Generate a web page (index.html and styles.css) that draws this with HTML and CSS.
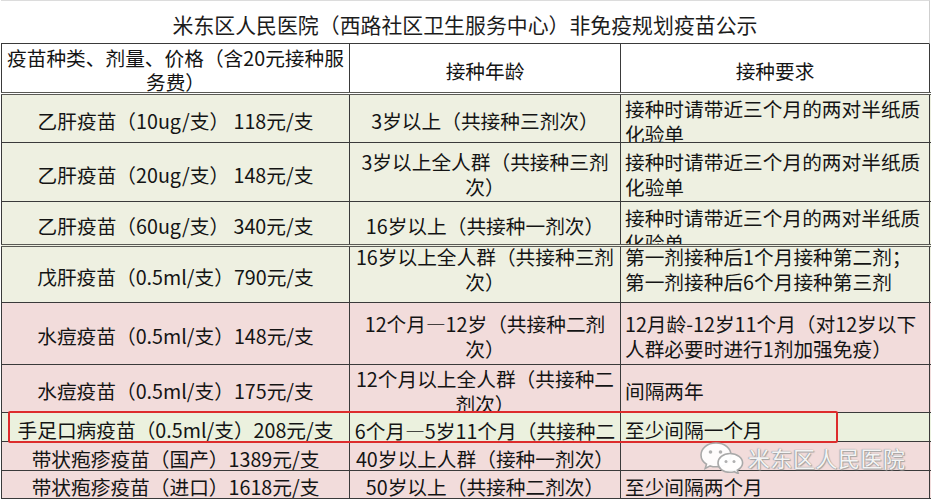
FILE: index.html
```html
<!DOCTYPE html>
<html lang="zh-CN">
<head>
<meta charset="utf-8">
<title>非免疫规划疫苗公示</title>
<link rel="stylesheet" href="styles.css">
</head>
<body>
<div class="sheet">
  <div class="title">米东区人民医院（西路社区卫生服务中心）非免疫规划疫苗公示</div>

  <div class="row head">
    <div class="cell c1">疫苗种类、剂量、价格（含20元接种服<br>务费）</div>
    <div class="cell c2">接种年龄</div>
    <div class="cell c2">接种要求</div>
  </div>

  <div class="row r1 green">
    <div class="cell c1">乙肝疫苗（10ug/支） 118元/支</div>
    <div class="cell c2">3岁以上（共接种三剂次）</div>
    <div class="cell c3">接种时请带近三个月的两对半纸质<br>化验单</div>
  </div>

  <div class="row r2 green">
    <div class="cell c1">乙肝疫苗（20ug/支） 148元/支</div>
    <div class="cell c2">3岁以上全人群（共接种三剂<br>次）</div>
    <div class="cell c3">接种时请带近三个月的两对半纸质<br>化验单</div>
  </div>

  <div class="row r3 green dbl">
    <div class="cell c1">乙肝疫苗（60ug/支） 340元/支</div>
    <div class="cell c2">16岁以上（共接种一剂次）</div>
    <div class="cell c3 top t3">接种时请带近三个月的两对半纸质<br>化验单</div>
  </div>

  <div class="row r4 green">
    <div class="cell c1">戊肝疫苗（0.5ml/支）790元/支</div>
    <div class="cell c2 top t0"><span class="up">16岁以上全人群（共接种三剂<br>次）</span></div>
    <div class="cell c3 top t0"><span class="up">第一剂接种后1个月接种第二剂；<br>第一剂接种后6个月接种第三剂</span></div>
  </div>

  <div class="row r5 pink">
    <div class="cell c1">水痘疫苗（0.5ml/支）148元/支</div>
    <div class="cell c2">12个月—12岁（共接种二剂<br>次）</div>
    <div class="cell c3">12月龄-12岁11个月（对12岁以下<br>人群必要时进行1剂加强免疫）</div>
  </div>

  <div class="row r6 pink">
    <div class="cell c1">水痘疫苗（0.5ml/支）175元/支</div>
    <div class="cell c2">12个月以上全人群（共接种二<br>剂次）</div>
    <div class="cell c3">间隔两年</div>
  </div>

  <div class="row r7 lgreen">
    <div class="cell c1">手足口病疫苗（0.5ml/支）208元/支</div>
    <div class="cell c2 top t5">6个月—5岁11个月（共接种二<br>剂次）</div>
    <div class="cell c3">至少间隔一个月</div>
  </div>

  <div class="row r8 pink">
    <div class="cell c1">带状疱疹疫苗（国产）1389元/支</div>
    <div class="cell c2">40岁以上人群（接种一剂次）</div>
    <div class="cell c3"></div>
  </div>

  <div class="row r9 pink">
    <div class="cell c1">带状疱疹疫苗（进口）1618元/支</div>
    <div class="cell c2">50岁以上（共接种二剂次）</div>
    <div class="cell c3">至少间隔两个月</div>
  </div>

  <div class="redbox"></div>

  <div class="watermark">
    <svg class="wx" width="46" height="34" viewBox="0 0 46 34">
      <path d="M17 3 C8 3 2 8.5 2 15 C2 18.8 4 22 7.5 24.2 L6.2 28.5 L11.2 25.9 C13 26.5 15 26.8 17 26.8 C26 26.8 32 21.5 32 15 C32 8.5 26 3 17 3 Z" fill="rgba(255,255,255,0.9)" stroke="#a9a9a9" stroke-width="1.6"/>
      <circle cx="11.5" cy="12" r="1.8" fill="#b0b0b0"/>
      <circle cx="21.5" cy="12" r="1.8" fill="#b0b0b0"/>
      <path d="M31 13.5 C24 13.5 19 17.8 19 23 C19 28.2 24 32.3 31 32.3 C32.5 32.3 33.9 32.1 35.2 31.7 L39.3 33.6 L38.3 30.2 C41.6 28.3 43.6 25.8 43.6 23 C43.6 17.8 38.2 13.5 31 13.5 Z" fill="rgba(255,255,255,0.95)" stroke="#a9a9a9" stroke-width="1.6"/>
      <circle cx="27" cy="21.5" r="1.5" fill="#b0b0b0"/>
      <circle cx="35" cy="21.5" r="1.5" fill="#b0b0b0"/>
    </svg>
    <span class="wm-text">米东区人民医院</span>
  </div>
</div>
</body>
</html>
```

FILE: styles.css
```css
* {
  box-sizing: border-box;
}

html, body {
  margin: 0;
  padding: 0;
  background: #ffffff;
}

body {
  font-family: "Noto Sans CJK SC", "Noto Sans", sans-serif;
  color: #141414;
  width: 931px;
  height: 500px;
  overflow: hidden;
}

.sheet {
  position: relative;
  width: 931px;
  padding-left: 1px;
}

.title {
  height: 44px;
  border-top: 1px solid #dcdcdc;
  border-bottom: 1px solid #3a3a3a;
  border-right: 1px solid #cfcfcf;
  margin-right: 1px;
  display: flex;
  align-items: center;
  justify-content: center;
  padding-top: 4px;
  font-size: 20.9px;
  line-height: 25px;
  color: #1c1c1c;
  background: #ffffff;
}

.row {
  display: grid;
  grid-template-columns: 348px 271px 310px;
  border-bottom: 1px solid #3a3a3a;
}

.row.dbl,
.row.head {
  border-bottom: 3px double #5a5a55;
}

.cell {
  display: flex;
  flex-direction: column;
  justify-content: center;
  overflow: hidden;
  padding-top: 4px;
  border-left: 1px solid #3a3a3a;
  font-size: 19.7px;
  line-height: 25px;
  white-space: nowrap;
}

.cell:last-child {
  border-right: 1px solid #3a3a3a;
}

.c1,
.c2 {
  align-items: center;
  text-align: center;
}

.c3 {
  align-items: flex-start;
  text-align: left;
  padding-left: 4px;
}

.top {
  justify-content: flex-start;
}

.t0 { padding-top: 0; }
.t3 { padding-top: 3px; }
.t5 { padding-top: 5px; }

.up {
  display: block;
  margin-top: -3px;
}

.head {
  height: 51px;
  background: #ffffff;
}

.head .c1 {
  line-height: 24px;
}

.r1 { height: 48px; }
.r2 { height: 59px; }
.r3 { height: 45px; }
.r4 { height: 56px; }
.r5 { height: 62px; }
.r6 { height: 48px; }
.r7 { height: 29px; }
.r8 { height: 29px; }
.r9 { height: 28px; }

.green { background: #eef0e1; }
.lgreen { background: #ebf1de; }
.pink { background: #f2dcdb; }

.redbox {
  position: absolute;
  left: 8px;
  top: 411px;
  width: 830px;
  height: 32px;
  border: 2px solid #dd2c2c;
  border-radius: 2px;
  pointer-events: none;
}

.watermark {
  position: absolute;
  left: 699px;
  top: 440px;
  display: flex;
  align-items: center;
  gap: 3px;
  pointer-events: none;
}

.wm-text {
  font-size: 22px;
  line-height: 30px;
  color: rgba(255, 255, 255, 0.92);
  letter-spacing: 0.5px;
  text-shadow: 0 0 1px #8d8d8d, 1px 1px 1px #a5a5a5, -1px 0 1px #b5b5b5;
}
```
